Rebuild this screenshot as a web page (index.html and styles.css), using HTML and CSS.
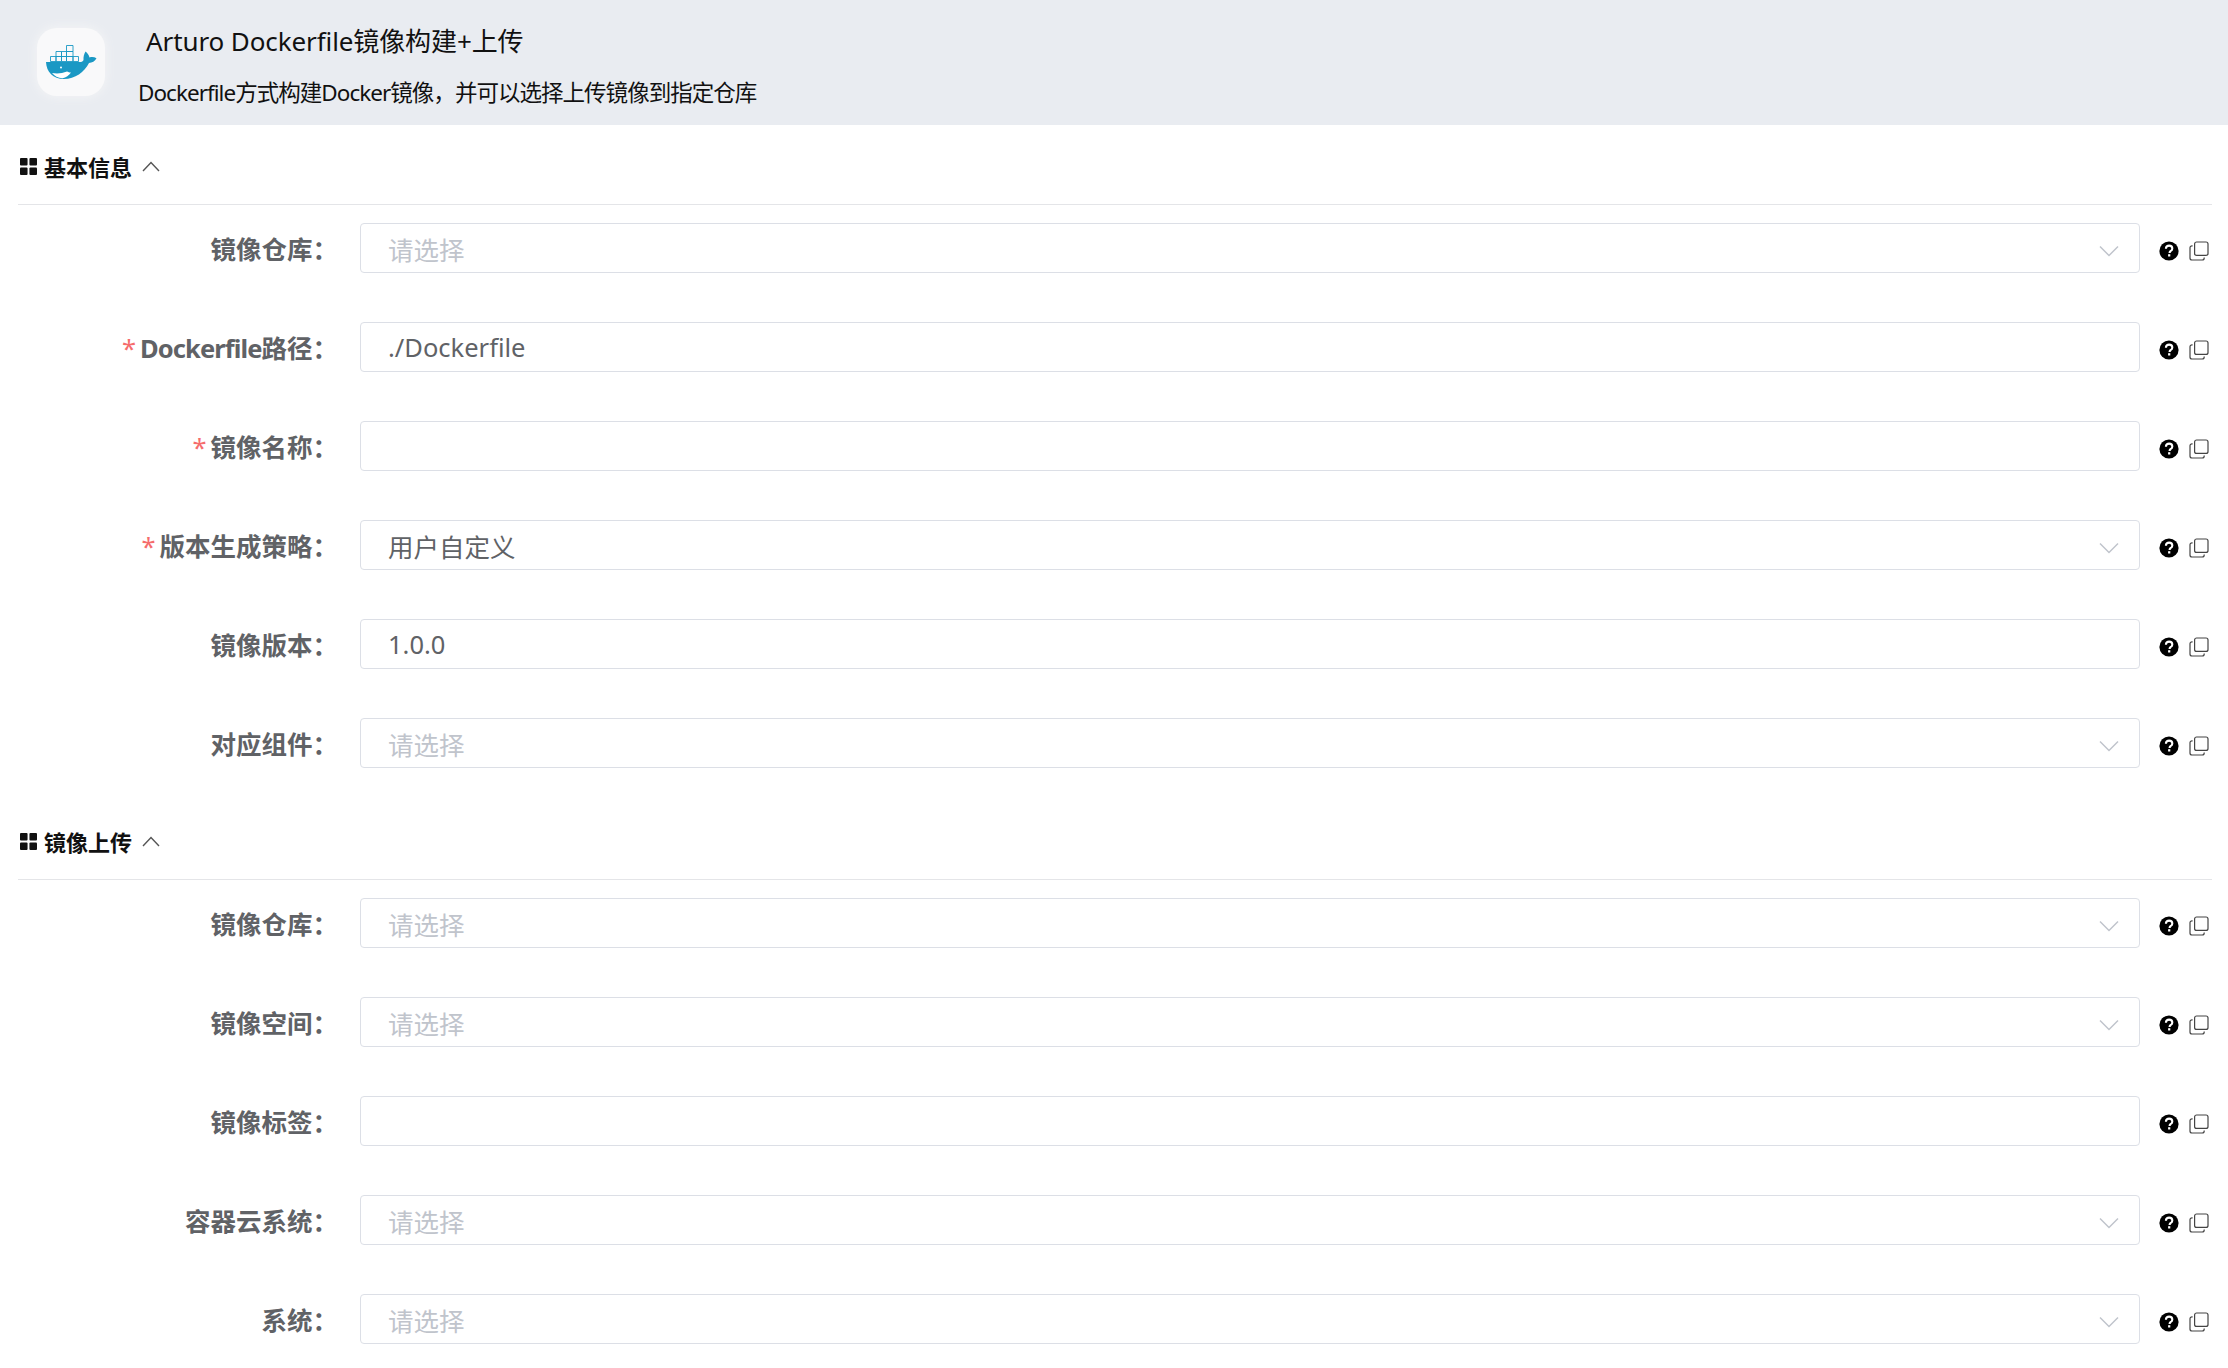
FILE: index.html
```html
<!DOCTYPE html>
<html lang="zh">
<head>
<meta charset="utf-8">
<title>Arturo Dockerfile镜像构建+上传</title>
<link rel="stylesheet" href="styles.css">
</head>
<body>
<svg class="defs" width="0" height="0">
  <defs>
    <symbol id="grid" viewBox="0 0 18 18"><rect x="0" y="0" width="8" height="8" rx="1"/><rect x="10" y="0" width="8" height="8" rx="1"/><rect x="0" y="10" width="8" height="8" rx="1"/><rect x="10" y="10" width="8" height="8" rx="1"/></symbol>
    <symbol id="down" viewBox="0 0 20 12"><path d="M1 1.500 10 10.500 19 1.500" fill="none" stroke="currentColor" stroke-width="1.500"/></symbol>
    <symbol id="up" viewBox="0 0 18 11"><path d="M1 10 9 1.500 17 10" fill="none" stroke="currentColor" stroke-width="1.400"/></symbol>
    <symbol id="help" viewBox="0 0 20 20"><circle cx="10" cy="10" r="9.600" fill="#000"/><path d="M6.900 7.700c0-2 1.400-3.100 3.200-3.100 1.900 0 3.200 1.100 3.200 2.800 0 1.300-.7 2-1.600 2.600-.8.500-1.100.9-1.100 1.700v.3" fill="none" stroke="#fff" stroke-width="2.100"/><rect x="9.100" y="13.200" width="2.200" height="2.300" fill="#fff"/></symbol>
    <symbol id="copy" viewBox="0 0 20 20"><rect x="5.600" y="1" width="13.400" height="13.400" rx="2" fill="none" stroke="#444" stroke-width="1.200"/><path d="M3.600 4.800H3a2 2 0 0 0-2 2V17a2 2 0 0 0 2 2h10.200a2 2 0 0 0 2-2v-.6" fill="none" stroke="#444" stroke-width="1.200"/></symbol>
  </defs>
</svg>

<header class="top">
  <div class="logo">
    <svg class="whale" viewBox="0 0 52 34" width="52" height="34">
      <g fill="none" stroke="#1a98c4" stroke-width="0.900">
        <path d="M21.500 .5h6.500v6h-6.500zM11 6.500h5.500v5H11zM16.500 6.500h5v5h-5zM21.500 6.500h6.500v5h-6.500zM5.500 11.500h5.500v5H5.500zM11 11.500h5.500v5H11zM16.500 11.500h5v5h-5zM21.500 11.500h6.500v5h-6.500zM28 11.500h5.500v5H28z"/>
      </g>
      <path d="M1 17h34c1.500 0 3-.5 3.500-2-.2-3 .5-6 2-8.500 2 1.500 3.500 3.500 4 6 2.500-.8 4.800-.5 7 .8-1.500 3.200-4.500 4.500-7.500 4.700C39.500 27 30 34 19 34 8 34 1.500 27 1 17z" fill="#1a98c4"/>
      <path d="M7 28c5 .8 10 .5 15-1.500 1 .5 2.500 1 4 1-2 3-5 5-8.500 5.800C13 33.200 9.500 31 7 28z" fill="#fff"/>
      <circle cx="16" cy="22.500" r="1" fill="#fff"/>
    </svg>
  </div>
  <div class="top-text">
    <h1 class="title">Arturo Dockerfile镜像构建+上传</h1>
    <p class="sub">Dockerfile方式构建Docker镜像，并可以选择上传镜像到指定仓库</p>
  </div>
</header>

<main class="content">
  <section class="section">
    <div class="sec-head">
      <svg class="sec-grid"><use href="#grid"/></svg>
      <span class="sec-title">基本信息</span>
      <svg class="sec-up"><use href="#up"/></svg>
    </div>
    <div class="rows">
      <div class="row"><label class="lbl">镜像仓库：</label><div class="field"><span class="ph">请选择</span><svg class="arrow"><use href="#down"/></svg></div><div class="tools"><svg class="ic"><use href="#help"/></svg><svg class="ic"><use href="#copy"/></svg></div></div>
      <div class="row"><label class="lbl"><i class="req">*</i><span class="latin">Dockerfile</span>路径：</label><div class="field"><span class="val">./Dockerfile</span></div><div class="tools"><svg class="ic"><use href="#help"/></svg><svg class="ic"><use href="#copy"/></svg></div></div>
      <div class="row"><label class="lbl"><i class="req">*</i>镜像名称：</label><div class="field"></div><div class="tools"><svg class="ic"><use href="#help"/></svg><svg class="ic"><use href="#copy"/></svg></div></div>
      <div class="row"><label class="lbl"><i class="req">*</i>版本生成策略：</label><div class="field"><span class="val">用户自定义</span><svg class="arrow"><use href="#down"/></svg></div><div class="tools"><svg class="ic"><use href="#help"/></svg><svg class="ic"><use href="#copy"/></svg></div></div>
      <div class="row"><label class="lbl">镜像版本：</label><div class="field"><span class="val">1.0.0</span></div><div class="tools"><svg class="ic"><use href="#help"/></svg><svg class="ic"><use href="#copy"/></svg></div></div>
      <div class="row"><label class="lbl">对应组件：</label><div class="field"><span class="ph">请选择</span><svg class="arrow"><use href="#down"/></svg></div><div class="tools"><svg class="ic"><use href="#help"/></svg><svg class="ic"><use href="#copy"/></svg></div></div>
    </div>
  </section>
  <section class="section">
    <div class="sec-head">
      <svg class="sec-grid"><use href="#grid"/></svg>
      <span class="sec-title">镜像上传</span>
      <svg class="sec-up"><use href="#up"/></svg>
    </div>
    <div class="rows">
      <div class="row"><label class="lbl">镜像仓库：</label><div class="field"><span class="ph">请选择</span><svg class="arrow"><use href="#down"/></svg></div><div class="tools"><svg class="ic"><use href="#help"/></svg><svg class="ic"><use href="#copy"/></svg></div></div>
      <div class="row"><label class="lbl">镜像空间：</label><div class="field"><span class="ph">请选择</span><svg class="arrow"><use href="#down"/></svg></div><div class="tools"><svg class="ic"><use href="#help"/></svg><svg class="ic"><use href="#copy"/></svg></div></div>
      <div class="row"><label class="lbl">镜像标签：</label><div class="field"></div><div class="tools"><svg class="ic"><use href="#help"/></svg><svg class="ic"><use href="#copy"/></svg></div></div>
      <div class="row"><label class="lbl">容器云系统：</label><div class="field"><span class="ph">请选择</span><svg class="arrow"><use href="#down"/></svg></div><div class="tools"><svg class="ic"><use href="#help"/></svg><svg class="ic"><use href="#copy"/></svg></div></div>
      <div class="row"><label class="lbl">系统：</label><div class="field"><span class="ph">请选择</span><svg class="arrow"><use href="#down"/></svg></div><div class="tools"><svg class="ic"><use href="#help"/></svg><svg class="ic"><use href="#copy"/></svg></div></div>
    </div>
  </section>
</main>
</body>
</html>
```

FILE: styles.css
```css
* { box-sizing: border-box; }
html, body { margin: 0; padding: 0; height: 100%; overflow: hidden; background: #fff; }
body { font-family: "Noto Sans", "Noto Sans CJK SC", "Liberation Sans", sans-serif; color: #303133; }
.defs { position: absolute; }

.top { height: 125px; background: #e9ecf1; display: flex; padding: 28px 0 0 37px; }
.logo { width: 68px; height: 68px; border-radius: 20px; background: #f9f9fa; box-shadow: 0 0 8px 2px #f2f3f5; display: flex; align-items: center; justify-content: center; flex: none; }
.whale { filter: blur(0.4px); }
.top-text { margin-left: 33px; margin-top: -6px; }
.title { margin: 0 0 0 8px; font-size: 26px; line-height: 36px; font-weight: 400; color: #111; white-space: nowrap; letter-spacing: -0.1px; padding-top: 1px; }
.sub { margin: 18px 0 0 0; font-size: 22.500px; line-height: 32px; color: #111; white-space: nowrap; letter-spacing: -0.97px; }

.content { padding: 0 16px 0 18px; }
.sec-head { height: 80px; border-bottom: 1px solid #e4e5e8; display: flex; align-items: center; padding: 21px 0 18px 2px; }
.sec-grid { width: 17px; height: 17px; fill: #111; flex: none; margin-right: 7px; }
.sec-title { font-size: 22px; font-weight: 700; color: #111; }
.sec-up { width: 18px; height: 11px; margin-left: 10px; color: #555; }
.rows { padding-top: 18px; }
.section + .section { margin-top: -17px; }
.row { display: flex; align-items: center; height: 50px; margin-bottom: 49px; }
.lbl { width: 342px; flex: none; padding-right: 22px; text-align: right; font-size: 25.500px; font-weight: 700; color: #606266; white-space: nowrap; margin-top: -2px; }
.latin { letter-spacing: -0.9px; }
.req { font-style: normal; color: #f56c6c; margin-right: 4px; font-weight: 400; }
.field { width: 1780px; flex: none; height: 50px; border: 1.500px solid #dcdfe6; border-radius: 4px; display: flex; align-items: center; padding: 0 20px 0 27px; font-size: 25.500px; }
.ph { color: #c0c4cc; }
.val { color: #606266; }
.arrow { width: 20px; height: 12px; margin-left: auto; color: #c0c4cc; margin-top: 6px; }
.tools { display: flex; align-items: center; gap: 10px; margin-left: 19px; margin-top: 5px; }
.ic { width: 20px; height: 20px; flex: none; }
```
